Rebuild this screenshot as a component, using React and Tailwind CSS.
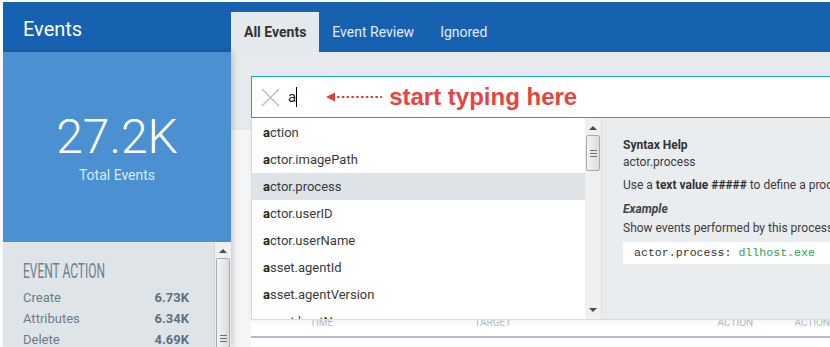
const suggestions = [
  "action",
  "actor.imagePath",
  "actor.process",
  "actor.userID",
  "actor.userName",
  "asset.agentId",
  "asset.agentVersion",
  "asset.hostName",
];

const actions = [
  { label: "Create", value: "6.73K" },
  { label: "Attributes", value: "6.34K" },
  { label: "Delete", value: "4.69K" },
];

const UpArrow = () => (
  <div className="w-0 h-0 border-x-[4px] border-x-transparent border-b-[4px] border-b-[#4a4a4a]"></div>
);

const DownArrow = () => (
  <div className="w-0 h-0 border-x-[4px] border-x-transparent border-t-[4px] border-t-[#4a4a4a]"></div>
);

const Thumb = ({ height }) => (
  <div
    className={`w-[14px] ${height} mx-auto rounded-[2px] border border-[#a9a9a9] bg-gradient-to-r from-[#f4f4f4] to-[#dcdcdc] flex flex-col items-center justify-center gap-[2px]`}
  >
    <div className="w-[7px] h-px bg-[#6e6e6e]"></div>
    <div className="w-[7px] h-px bg-[#6e6e6e]"></div>
    <div className="w-[7px] h-px bg-[#6e6e6e]"></div>
  </div>
);

const App = () => {
  return (
    <div className="w-[830px] h-[347px] overflow-hidden bg-white pt-[2px] pl-[3px] font-[Roboto,sans-serif]">
      {/* Header */}
      <div className="h-[50px] bg-[#1662b0] flex">
        <div className="w-[228px] pl-[20px] pt-[3px] flex items-center text-white text-[20px] leading-none">
          Events
        </div>
        <div className="flex items-end h-full">
          <div className="h-[40px] px-[13px] flex items-center bg-[#e4e9ed] text-[#333] text-[14px] font-bold">
            All Events
          </div>
          <div className="h-[40px] px-[13px] flex items-center text-[#e3ebf5] text-[14px]">
            Event Review
          </div>
          <div className="h-[40px] px-[13px] flex items-center text-[#e3ebf5] text-[14px]">
            Ignored
          </div>
        </div>
      </div>

      <div className="flex h-[295px]">
        {/* Sidebar */}
        <div className="w-[228px] flex flex-col relative z-10 shadow-[2px_0_6px_rgba(0,0,0,0.18)]">
          <div className="h-[190px] bg-[#4b91d1] flex flex-col items-center pt-[57px]">
            <div className="text-white text-[48px] font-light leading-[56px]">27.2K</div>
            <div className="text-[#dce9f6] text-[14px] leading-[20px]">Total Events</div>
          </div>
          <div className="flex-1 flex overflow-hidden">
            <div className="flex-1 bg-[#dfe4e8] pl-[20px] pr-[25px] pt-[17px]">
              <div className="text-[21px] leading-[24px] text-[#6c7f90] scale-x-[0.57] origin-left whitespace-nowrap">
                EVENT ACTION
              </div>
              <div className="mt-[4px]">
                {actions.map((a) => (
                  <div key={a.label} className="flex justify-between text-[13px] leading-[21px]">
                    <span className="text-[#6a7c8c]">{a.label}</span>
                    <span className="text-[#5d7080] font-bold">{a.value}</span>
                  </div>
                ))}
              </div>
            </div>
            <div className="w-[17px] bg-[#f0f0f0] border-l border-[#d4d9dd] flex flex-col items-center pt-[7px]">
              <UpArrow />
              <div className="mt-[5px] w-full">
                <Thumb height="h-[160px]" />
              </div>
            </div>
          </div>
        </div>

        {/* Main */}
        <div className="flex-1 relative overflow-hidden bg-[#f3f5f6]">
          <div className="bg-[#e6eaed] pt-[24px] pl-[20px] pb-[12px]">
            <div className="w-[640px] h-[42px] bg-white border border-[#1e9be9] flex items-center pl-[9px]">
              <svg width="19" height="19" viewBox="0 0 19 19">
                <path d="M1 1 L18 18 M18 1 L1 18" stroke="#b7c3cb" strokeWidth="1.6" fill="none" />
              </svg>
              <span className="ml-[8px] text-[15px] text-[#222] leading-none">a</span>
              <span className="w-px h-[20px] bg-black"></span>
              <svg width="56" height="12" viewBox="0 0 56 12" className="ml-[29px]">
                <path d="M0 6 L9 1.5 L9 10.5 Z" fill="#e53b35" />
                <line x1="11" y1="6" x2="56" y2="6" stroke="#e53b35" strokeWidth="2.2" strokeDasharray="2.5 2.3" />
              </svg>
              <span className="ml-[7px] text-[24px] font-bold text-[#e8433e] font-['Liberation_Sans',Arial,sans-serif] leading-none">
                start typing here
              </span>
            </div>
          </div>

          {/* Table card behind dropdown */}
          <div className="ml-[20px] bg-white">
            <div className="h-[180px]"></div>
            <div className="h-[24px] flex items-center text-[10px] text-[#b0bec5] uppercase">
              <div className="w-[228px] pl-[59px]">Time</div>
              <div className="w-[250px]">Target</div>
              <div className="w-[79px]">Action</div>
              <div>Action</div>
            </div>
            <div className="h-[2px]"></div>
            <div className="h-[2px] bg-[#b3bfc7]"></div>
            <div className="h-[20px]"></div>
          </div>

          {/* Autocomplete dropdown */}
          <div className="absolute left-[20px] top-[66px] w-[600px] h-[202px] flex border-b border-[#d6dde2] shadow-[0_2px_4px_rgba(0,0,0,0.05)]">
            <div className="w-[334px] bg-white border-l border-[#d6dde2] overflow-hidden pt-px">
              {suggestions.map((s) => (
                <div
                  key={s}
                  className={`h-[27px] shrink-0 flex items-center pl-[11px] text-[13px] text-[#3a3a3a] ${
                    s === "actor.process" ? "bg-[#dde3e7]" : ""
                  }`}
                >
                  <span className="font-bold text-[#222]">a</span>
                  {s.slice(1)}
                </div>
              ))}
            </div>
            <div className="w-[16px] bg-[#f0f0f0] flex flex-col items-center pt-[8px] pb-[7px]">
              <UpArrow />
              <div className="mt-[5px] w-full">
                <Thumb height="h-[36px]" />
              </div>
              <div className="flex-1"></div>
              <DownArrow />
            </div>
            <div className="flex-1 bg-[#eaedf0] border-l border-[#dde2e6] pl-[21px] pt-[19px] text-[12px] text-[#3c3c3c] whitespace-nowrap overflow-hidden">
              <div className="leading-[17px] font-bold text-[#333]">Syntax Help</div>
              <div className="leading-[17px]">actor.process</div>
              <div className="leading-[17px] mt-[6px]">
                Use a <b className="text-[#333]">text value #####</b> to define a process name
              </div>
              <div className="leading-[17px] mt-[7px] font-bold italic text-[#444]">Example</div>
              <div className="leading-[17px] mt-[2px]">Show events performed by this process name</div>
              <div className="mt-[5px] h-[22px] bg-white flex items-center pl-[11px] font-['Liberation_Mono',monospace] text-[11.6px]">
                <span className="text-[#333]">actor.process:</span>
                <span className="text-[#2f9e57] ml-[7px]">dllhost.exe</span>
              </div>
            </div>
          </div>
        </div>
      </div>
    </div>
  );
};

export default App;
